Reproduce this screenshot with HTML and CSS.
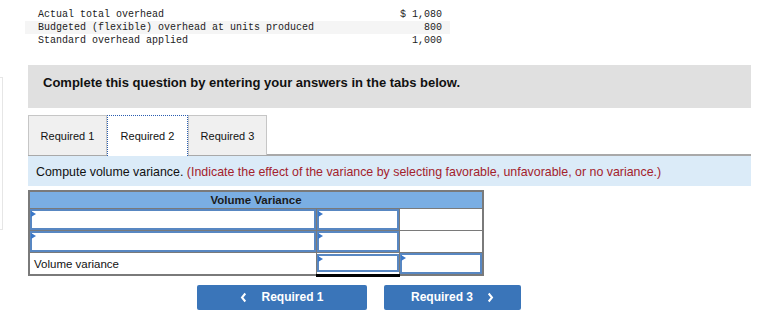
FILE: index.html
```html
<!DOCTYPE html>
<html>
<head>
<meta charset="utf-8">
<link rel="stylesheet" href="styles.css">
</head>
<body>
<div class="data">
  <div class="data-row"><span>Actual total overhead</span><span>$ 1,080</span></div>
  <div class="data-row alt"><span>Budgeted (flexible) overhead at units produced</span><span>800</span></div>
  <div class="data-row"><span>Standard overhead applied</span><span>1,000</span></div>
</div>
<div class="layout">
  <div class="side"></div>
  <div class="main">
    <div class="banner">Complete this question by entering your answers in the tabs below.</div>
    <div class="tabs">
      <div class="tab">Required 1</div>
      <div class="tab active">Required 2</div>
      <div class="tab">Required 3</div>
    </div>
    <div class="instr">Compute volume variance. <span class="hint">(Indicate the effect of the variance by selecting favorable, unfavorable, or no variance.)</span></div>
    <table class="grid">
      <tr><th colspan="3">Volume Variance</th></tr>
      <tr>
        <td class="c1"><div class="inp mark"></div></td>
        <td class="c2"><div class="inp mark"></div></td>
        <td class="c3"></td>
      </tr>
      <tr>
        <td class="c1"><div class="inp mark"></div></td>
        <td class="c2"><div class="inp mark"></div></td>
        <td class="c3"></td>
      </tr>
      <tr>
        <td class="c1 label">Volume variance</td>
        <td class="c2 total"><div class="inp mark"></div></td>
        <td class="c3"><div class="inp mark"></div></td>
      </tr>
    </table>
    <div class="nav">
      <button class="btn prev"><svg class="chev" width="7" height="11" viewBox="0 0 7 11"><path d="M5.3 1.5 L2 5.5 L5.3 9.5" fill="none" stroke="#fff" stroke-width="2"/></svg><span>Required 1</span></button>
      <button class="btn next"><span>Required 3</span><svg class="chev" width="7" height="11" viewBox="0 0 7 11"><path d="M1.7 1.5 L5 5.5 L1.7 9.5" fill="none" stroke="#fff" stroke-width="2"/></svg></button>
    </div>
  </div>
</div>
</body>
</html>
```
FILE: styles.css
```css
body {
  margin: 0;
  background: #fff;
  font-family: "Liberation Sans", Arial, sans-serif;
  color: #000;
}
.data {
  margin: 8px 0 0 25px;
  width: 425px;
  font-family: "Liberation Mono", "DejaVu Sans Mono", monospace;
  font-size: 10px;
  color: #222;
}
.data-row {
  display: flex;
  justify-content: space-between;
  height: 13px;
  line-height: 13px;
  padding: 0 8px 0 13px;
}
.data-row.alt {
  background: #f5f5f5;
}
.layout {
  display: flex;
  margin-top: 18px;
}
.side {
  width: 2px;
  height: 151px;
  margin-top: 12px;
  margin-right: 25px;
  border: 1px solid #e6e6e6;
  border-left: none;
}
.main {
  width: 723px;
}
.banner {
  height: 43px;
  box-sizing: border-box;
  padding: 9px 15px 0;
  background: #e0e0e0;
  font-weight: bold;
  font-size: 13px;
  line-height: 17px;
  color: #111;
}
.tabs {
  display: flex;
  margin-top: 7px;
  height: 39px;
  border-bottom: 2px solid #a9a9a9;
}
.tab {
  width: 79px;
  box-sizing: border-box;
  height: 40px;
  border: 1px solid #c6c6c6;
  border-bottom: none;
  background: #f0f0f0;
  font-size: 11px;
  line-height: 40px;
  text-align: center;
  color: #111;
}
.tab.active {
  width: 81px;
  background: #fff;
  border: 1px dotted #2a5db0;
  border-bottom: none;
  height: 41px;
}
.instr {
  height: 30px;
  box-sizing: border-box;
  padding: 8px 8px 0;
  background: #dbebf8;
  font-size: 12.4px;
  line-height: 16px;
  color: #111;
}
.hint {
  color: #a3222c;
}
.grid {
  margin-top: 4px;
  border-collapse: collapse;
  width: 456px;
  border: 2px solid #7a7a7a;
}
.grid th {
  background: #7aaee3;
  height: 16px;
  padding: 0;
  font-size: 11.5px;
  font-weight: bold;
  color: #1a1a1a;
  border: 1px solid #7a7a7a;
}
.grid td {
  border: 1px solid #7a7a7a;
  height: 21px;
  padding: 0;
  box-sizing: border-box;
}
.c1 { width: 289px; }
.c2 { width: 83px; }
.c3 { width: 84px; }
.grid td.label {
  padding: 0 4px;
  font-size: 11.5px;
  color: #111;
}
.grid td.total {
  border-top: 1px solid #000;
  border-bottom: 3px solid #000;
}
.inp {
  position: relative;
  height: 21px;
  box-sizing: border-box;
  border: 2px solid #5887c2;
  background: #fff;
}
.total .inp {
  height: 18px;
}
.mark::before {
  content: "";
  position: absolute;
  left: -1px;
  top: 0;
  border-left: 5px solid #3a77c8;
  border-top: 3px solid transparent;
  border-bottom: 3px solid transparent;
}
.nav {
  display: flex;
  gap: 17px;
  margin: 8px 0 0 169px;
}
.btn {
  display: flex;
  align-items: center;
  justify-content: center;
  height: 25px;
  border: none;
  border-radius: 2px;
  background: #3a75b9;
  color: #fff;
  font-family: "Liberation Sans", Arial, sans-serif;
  font-weight: bold;
  font-size: 12px;
  padding: 0;
}
.btn.prev { width: 170px; gap: 14px; }
.btn.next { width: 137px; gap: 14px; }
.chev { display: block; }
```
